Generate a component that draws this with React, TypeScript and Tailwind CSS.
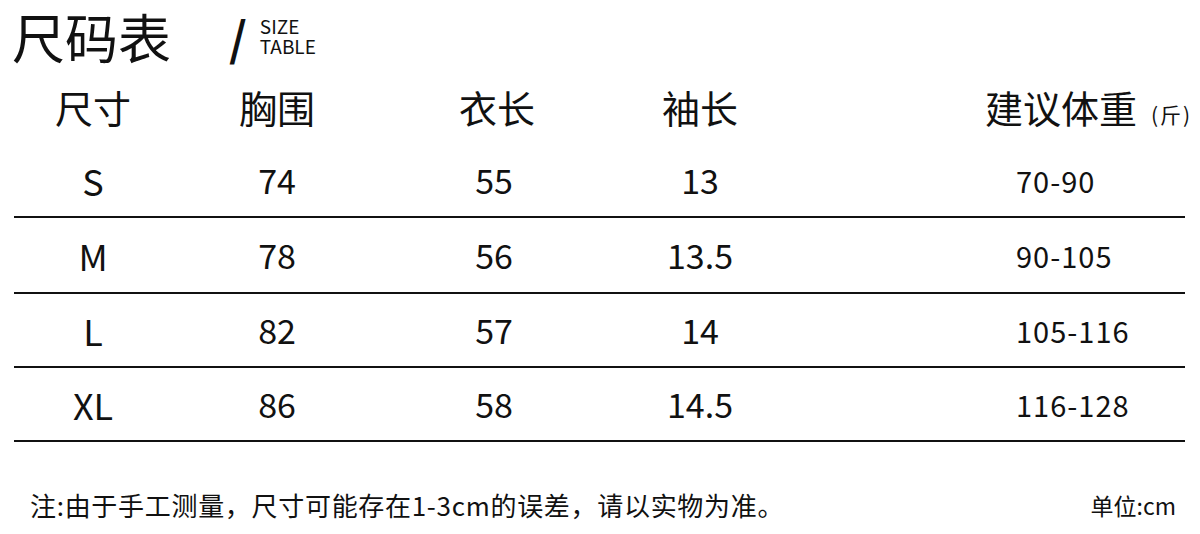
import React from 'react'

type Row = { size: string; chest: string; length: string; sleeve: string; weight: string; h: string }

const rows: Row[] = [
  { size: 'S', chest: '74', length: '55', sleeve: '13', weight: '70-90', h: 'h-[74px]' },
  { size: 'M', chest: '78', length: '56', sleeve: '13.5', weight: '90-105', h: 'h-[76px]' },
  { size: 'L', chest: '82', length: '57', sleeve: '14', weight: '105-116', h: 'h-[74px]' },
  { size: 'XL', chest: '86', length: '58', sleeve: '14.5', weight: '116-128', h: 'h-[74px]' },
]

const grid = 'grid grid-cols-[158px_210px_224px_188px_125px_266px]'

export default function App() {
  return (
    <div className="w-[1200px] h-[534px] bg-white text-[#111] font-['Noto_Sans_CJK_SC','Noto_Sans',sans-serif] overflow-hidden">
      {/* title */}
      <div className="flex items-center h-[70px] pl-[12px] pt-[2px]">
        <span className="text-[53px] leading-[60px]">尺码表</span>
        <span className="ml-[58px] text-[46px] leading-[54px] font-bold">/</span>
        <div className="ml-[13px] flex flex-col text-[19px] leading-[20px]">
          <span>SIZE</span>
          <span>TABLE</span>
        </div>
      </div>

      <div className="mx-[14px] w-[1171px]">
        {/* header */}
        <div className={`${grid} h-[74px] items-center text-[38px] leading-none`}>
          <div className="text-center">尺寸</div>
          <div className="text-center">胸围</div>
          <div className="text-center pl-[6px]">衣长</div>
          <div className="text-center">袖长</div>
          <div />
          <div className="flex items-baseline whitespace-nowrap pl-[66px]">
            <span>建议体重</span>
            <span className="ml-[14px] text-[21px] tracking-[2px]">(斤)</span>
          </div>
        </div>

        {rows.map(r => (
          <div key={r.size} className={`${grid} ${r.h} items-center border-b-2 border-[#111] leading-none`}>
            <div className="text-center text-[36px]">{r.size}</div>
            <div className="text-center text-[34px]">{r.chest}</div>
            <div className="text-center text-[34px]">{r.length}</div>
            <div className="text-center text-[34px]">{r.sleeve}</div>
            <div />
            <div className="pl-[97px] text-[29px] tracking-[1px]">{r.weight}</div>
          </div>
        ))}
      </div>

      {/* footer */}
      <div className="flex items-center justify-between pl-[30px] pr-[24px] mt-[50px]">
        <span className="text-[26px] leading-none tracking-[0.7px]">注:由于手工测量，尺寸可能存在1-3cm的误差，请以实物为准。</span>
        <span className="text-[23px] leading-none">单位:cm</span>
      </div>
    </div>
  )
}
